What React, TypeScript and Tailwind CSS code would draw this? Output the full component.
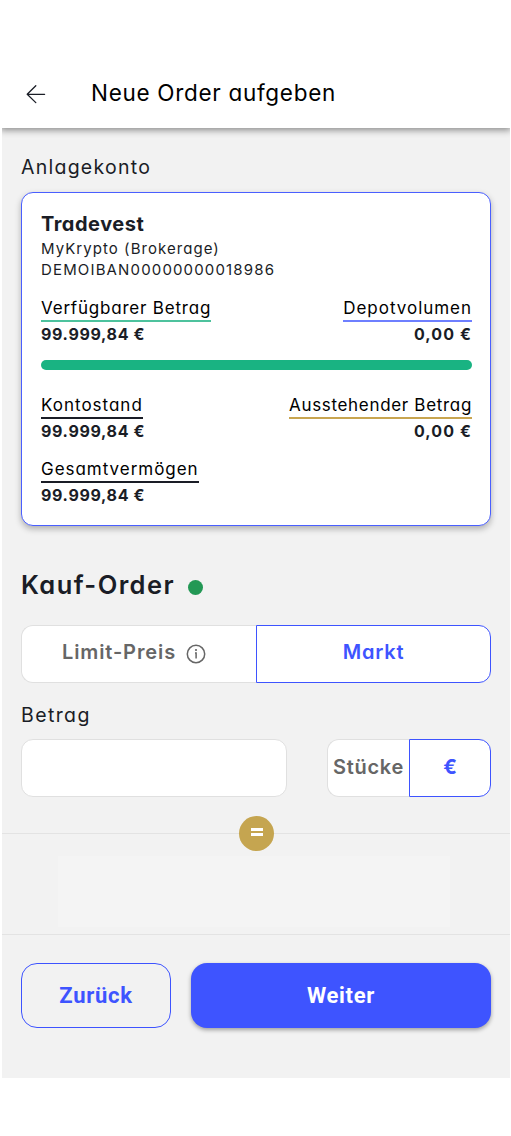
import React, { useState } from 'react';

interface AmountProps {
  label: string;
  value: string;
  labelClass: string;
  valueClass?: string;
  align?: 'left' | 'right';
}

const Amount: React.FC<AmountProps> = ({ label, value, labelClass, valueClass = 'tracking-[0.65px]', align = 'left' }) => (
  <div className={`flex flex-col ${align === 'right' ? 'items-end' : 'items-start'}`}>
    <span className={`border-b-2 pb-0.5 text-[17px] leading-5 text-black whitespace-nowrap ${labelClass}`}>{label}</span>
    <span className={`mt-0.5 text-[16px] leading-[21px] font-bold ${valueClass}`}>{value}</span>
  </div>
);

const ArrowLeft = () => (
  <svg width="20" height="20" viewBox="0 0 20 20" fill="none" stroke="#1a1d26" strokeWidth="1.3" strokeLinecap="round" strokeLinejoin="round">
    <path d="M18.6 10.3H1.2M9.8 1.8L1.2 10.3L9.8 18.6" />
  </svg>
);

const InfoIcon = () => (
  <svg width="20" height="20" viewBox="0 0 20 20" fill="none" stroke="#666666" strokeWidth="1.5">
    <circle cx="10" cy="10" r="8.7" />
    <path d="M9 8.9H10.1V14.4" strokeWidth="1.5" />
    <circle cx="10" cy="6" r="1.1" fill="#666666" stroke="none" />
  </svg>
);

const active = 'border-[#3e54ff] text-[#3e54ff]';
const inactive = 'border-[#e0e0e0] text-[#666666]';

export default function App() {
  const [orderType, setOrderType] = useState<'limit' | 'market'>('market');
  const [unit, setUnit] = useState<'pieces' | 'euro'>('euro');
  const [amount, setAmount] = useState('');

  return (
    <div className="h-[1136px] w-[511px] overflow-hidden bg-white font-['Inter',sans-serif] text-[#1a1d26] [font-feature-settings:'cv11']">
      <header className="relative z-10 flex h-32 items-center bg-white pt-[58px] pl-[26px] shadow-[0_2px_7px_rgba(0,0,0,0.45)] [clip-path:inset(0_1px_-14px_2px)]">
        <button aria-label="Zurück" className="pt-0.5"><ArrowLeft /></button>
        <h1 className="ml-[45px] text-[22.5px] leading-7 tracking-[0.7px] text-black">Neue Order aufgeben</h1>
      </header>

      <main className="mr-px ml-0.5 h-[950px] bg-[#f2f2f2]">
        <div className="px-[19px] pt-[25px]">
          <h2 className="text-[19.5px] leading-7 tracking-[1.25px]">Anlagekonto</h2>

          <section className="mt-[11px] h-[334px] rounded-xl border border-[#4a5fff] bg-white pt-[19px] pr-[18px] pl-[19px] shadow-[0_3px_6px_rgba(0,0,0,0.28)]">
            <h3 className="text-[20px] leading-6 font-bold tracking-[0.5px]">Tradevest</h3>
            <p className="mt-0.5 text-[15px] leading-[21px] tracking-[1.05px]">MyKrypto (Brokerage)</p>
            <p className="text-[15px] leading-[21px] tracking-[1.15px]">DEMOIBAN00000000018986</p>

            <div className="mt-[18px] flex justify-between">
              <Amount label="Verfügbarer Betrag" value="99.999,84 €" labelClass="border-[#4dc29d] tracking-[0.8px]" />
              <Amount label="Depotvolumen" value="0,00 €" labelClass="border-[#6e7fff] tracking-[0.97px]" valueClass="tracking-[1.1px]" align="right" />
            </div>
            <div className="mt-[15px] h-2.5 rounded-full bg-[#19b382]" />
            <div className="mt-[25px] flex justify-between">
              <Amount label="Kontostand" value="99.999,84 €" labelClass="border-[#1a1d26] tracking-[1px]" />
              <Amount label="Ausstehender Betrag" value="0,00 €" labelClass="border-[#c8a550] tracking-[0.68px]" valueClass="tracking-[1.1px]" align="right" />
            </div>
            <div className="mt-[17px]">
              <Amount label="Gesamtvermögen" value="99.999,84 €" labelClass="border-[#1a1d26] tracking-[0.97px]" />
            </div>
          </section>

          <div className="mt-11 flex items-center">
            <h2 className="text-[25.5px] leading-[30px] font-semibold tracking-[1.4px]">Kauf-Order</h2>
            <span className="mt-[5px] ml-[13px] size-[15px] rounded-full bg-[#239855]" />
          </div>

          <div className="mt-[25px] flex h-[58px] text-[20px] font-semibold">
            <button
              onClick={() => setOrderType('limit')}
              className={`flex w-[235px] items-center justify-center rounded-l-xl border border-r-0 bg-white pr-2.5 pb-1 tracking-[0.9px] ${orderType === 'limit' ? active : inactive}`}
            >
              Limit-Preis
              <span className="mt-1 ml-2.5"><InfoIcon /></span>
            </button>
            <button
              onClick={() => setOrderType('market')}
              className={`flex flex-1 items-center justify-center rounded-r-xl border bg-white pb-1 tracking-[0.8px] ${orderType === 'market' ? active : inactive}`}
            >
              Markt
            </button>
          </div>

          <label htmlFor="amount" className="mt-[19px] block text-[19.5px] leading-[26px] tracking-[1.4px]">Betrag</label>
          <div className="mt-[11px] flex h-[58px] justify-between">
            <input
              id="amount"
              value={amount}
              onChange={e => setAmount(e.target.value)}
              className="w-[266px] rounded-xl border border-[#e0e0e0] bg-white px-4 text-lg outline-none"
            />
            <div className="flex w-[164px] text-[20px] font-semibold">
              <button
                onClick={() => setUnit('pieces')}
                className={`w-[82px] rounded-l-xl border border-r-0 bg-white pb-[3px] tracking-[0.7px] ${unit === 'pieces' ? active : inactive}`}
              >
                Stücke
              </button>
              <button
                onClick={() => setUnit('euro')}
                className={`w-[82px] rounded-r-xl border bg-white pb-[3px] font-bold ${unit === 'euro' ? active : inactive}`}
              >
                €
              </button>
            </div>
          </div>
        </div>

        <div className="relative mt-9 h-[102px] border-y border-[#e3e3e3] pt-[22px]">
          <div className="ml-14 h-[71px] w-[392px] bg-[#f4f4f4]" />
          <div className="absolute -top-[18px] left-[237px] flex size-[35px] flex-col items-center justify-center gap-0.5 rounded-full bg-[#c5a550] pb-[3px]">
            <span className="h-[3px] w-3 bg-white" />
            <span className="h-[3px] w-3 bg-white" />
          </div>
        </div>

        <footer className="flex h-[93px] gap-5 px-[19px] pt-7 font-['Roboto',sans-serif] text-[22px] font-bold tracking-[0.7px]">
          <button className="h-[65px] w-[150px] shrink-0 rounded-2xl border border-[#3e54ff] text-[#3e54ff]">Zurück</button>
          <button className="h-[65px] flex-1 rounded-2xl bg-[#3e54ff] text-white shadow-[0_2px_4px_rgba(0,0,0,0.35)]">Weiter</button>
        </footer>
      </main>
    </div>
  );
}
